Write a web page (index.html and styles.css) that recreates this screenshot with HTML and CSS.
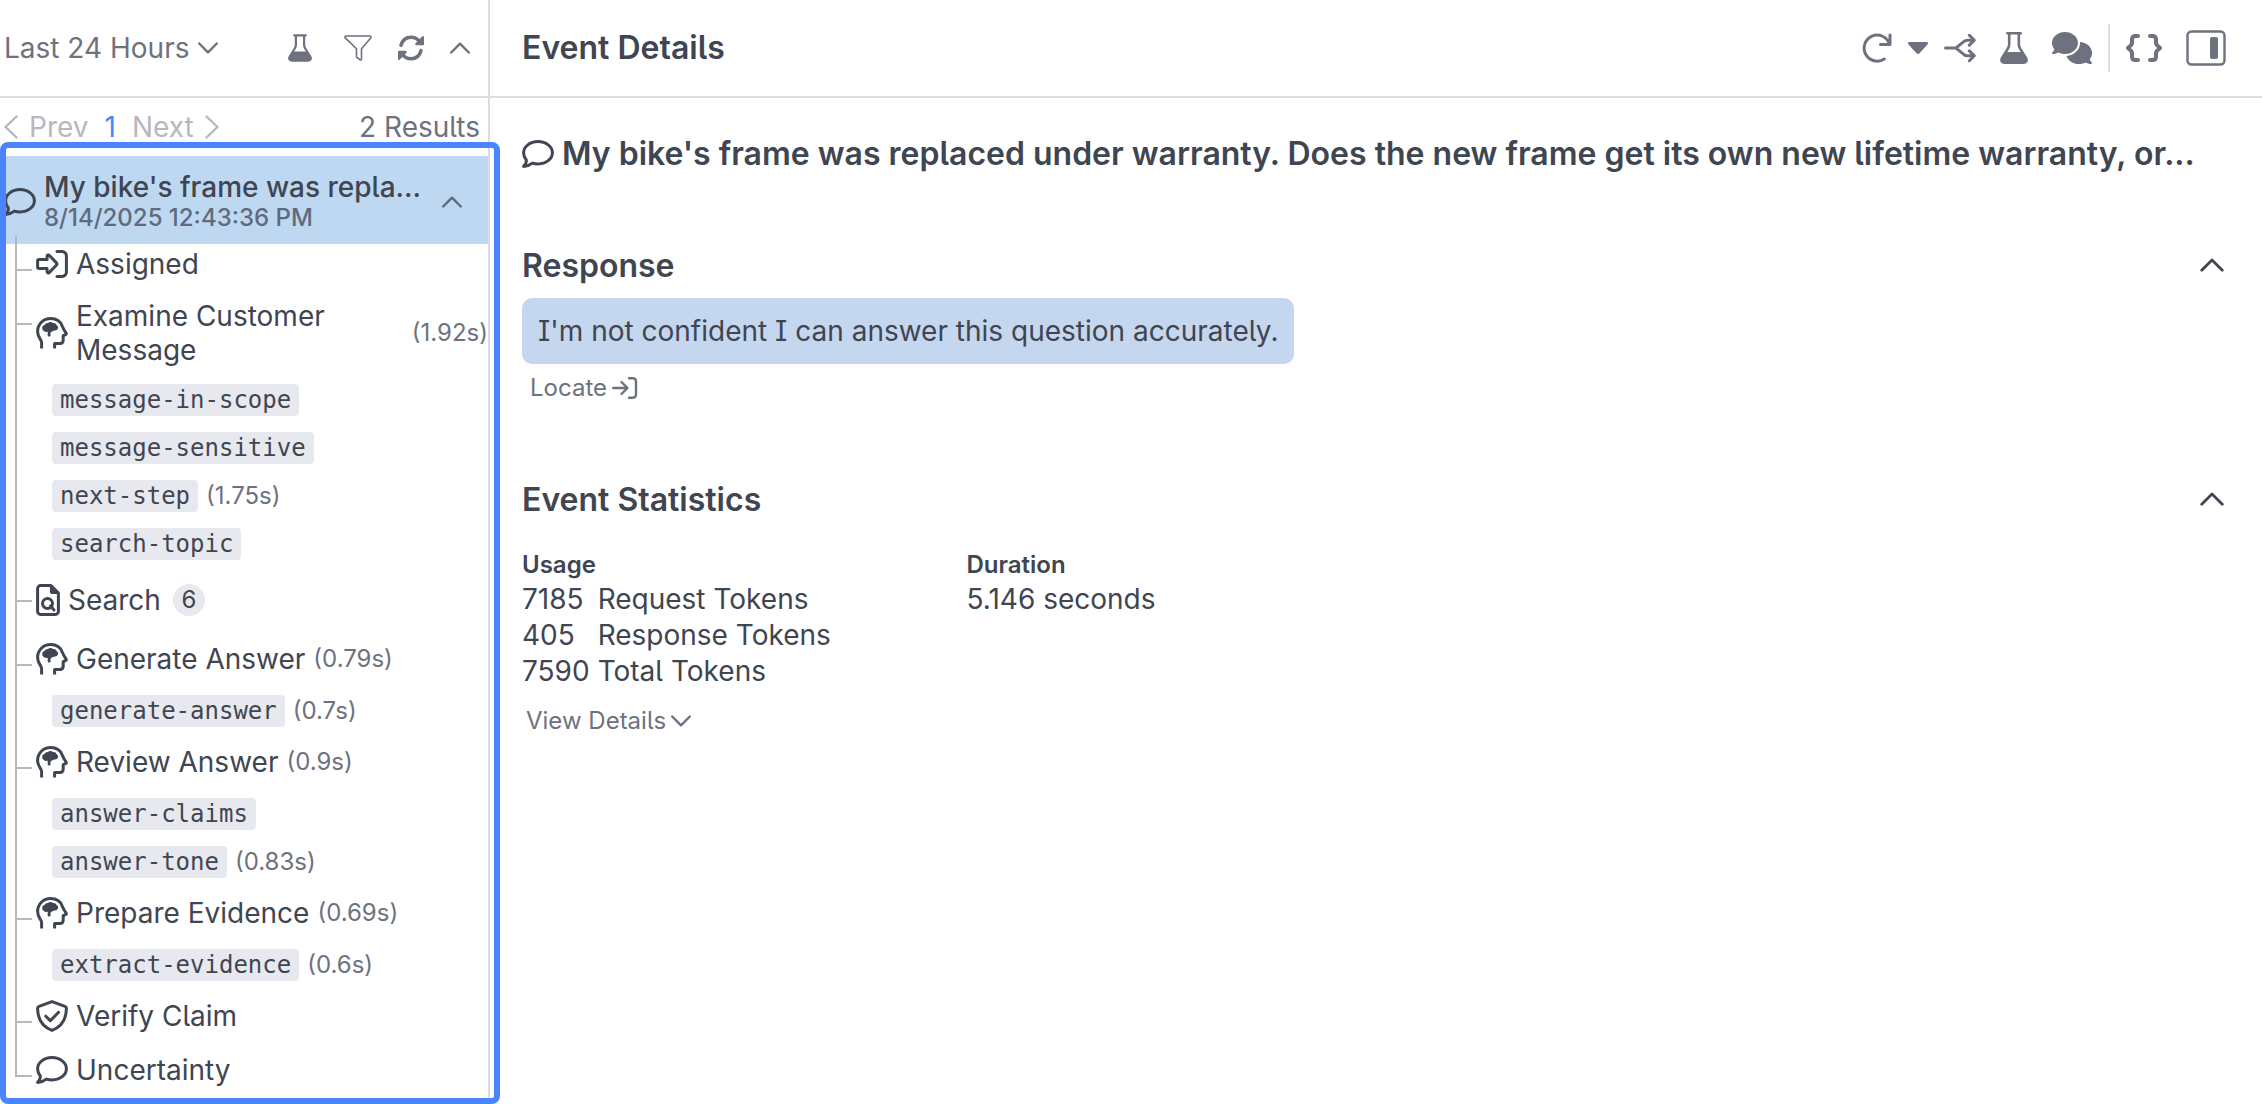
FILE: index.html
```html
<!DOCTYPE html>
<html lang="en">
<head>
    <meta charset="UTF-8">
    <meta name="viewport" content="width=device-width, initial-scale=1.0">
    <title>Event Details</title>
    <link rel="stylesheet" href="styles.css">
</head>
<body>

<!-- Shared icons -->
<svg class="sprite" aria-hidden="true">
    <symbol id="chevron-down" viewBox="0 0 20 12"><path class="line" d="M1.2 1.5 10 10.3l8.8-8.8"/></symbol>
    <symbol id="chevron-up" viewBox="0 0 20 12"><path class="line" d="M1.2 10.5 10 1.7l8.8 8.8"/></symbol>
    <symbol id="flask" viewBox="0 0 28 32">
        <path class="line flask-line" d="M7.300 1.300h13.400M9.200 1.500v10.800c0 1.500-.5 3-1.300 4.300L1.900 26.300c-1.200 2.100.2 4.400 2.600 4.400h19c2.400 0 3.800-2.300 2.600-4.400l-6-9.700c-.8-1.300-1.300-2.800-1.300-4.300V1.500"/>
        <path d="M5.500 20h17l4 7.500L24 31H4l-2.500-3.500z"/>
    </symbol>
    <symbol id="message" viewBox="0 0 32 28"><path class="line thick" d="M1.6 26.4c1.9-2 3-4.4 2.7-6.4-1.7-2-2.7-4.4-2.7-7.2C1.6 6.5 8 1.6 16 1.6s14.4 4.9 14.4 11.1S24 23.9 16 23.9c-2 0-3.900-.3-5.600-.8-2.400 1.900-5.400 3.100-8.800 3.300z"/></symbol>
    <symbol id="head" viewBox="0 0 32 32">
        <path class="line head-line" d="M5.600 31.400v-6.200C5.600 22.600 1.600 20.500 1.600 14.400 1.600 7 7.300 1.600 14.800 1.600c5.700 0 9.700 2.900 11.500 7.600.9 2.300 2.200 4.600 3.700 6.600.6.8.4 1.600-.4 1.900l-2.400 1v4.600c0 2.300-1 3.300-3.300 3.300h-5.300v4.800"/>
        <path d="M6.200 11c0-1.500 1-2.600 2.400-2.900.6-1.500 1.900-2.300 3.300-2.200 1.500-1.300 4-1.200 5.100.2 1.700-.3 3.100.6 3.600 2.100 1.200.5 1.700 1.500 1.500 2.600-.3 1.700-1.500 2.500-3 2.600-1.200 0-2.200.6-3.300 1.200-.7.500-1.300 1-1.300 2v2.200c0 1-2.800 1-2.800 0v-4c-2.800.5-5.500-1-5.500-3.800z"/>
    </symbol>
    <symbol id="locate" viewBox="0 0 26 22"><path class="line" d="M1.200 11h14M9.500 5l6 6-6 6M17 1.200h4a3 3 0 0 1 3 3v13.600a3 3 0 0 1-3 3h-4"/></symbol>
</svg>

<div class="app">
    <!-- Event list -->
    <aside class="sidebar">
        <div class="bar sidebar-bar">
            <label class="range">
                <select aria-label="Time range"><option>Last 24 Hours</option></select>
                <svg class="chevron"><use href="#chevron-down"/></svg>
            </label>
            <div class="sidebar-tools">
                <button aria-label="Tests"><svg width="24" height="28"><use href="#flask"/></svg></button>
                <button class="filter" aria-label="Filter">
                    <svg width="28" height="26" viewBox="0 0 28 26"><path class="line thin" d="M2.200 1h23.600c1 0 1.500 1.200.9 1.900L17.500 13.800v10.400c0 .7-.8 1-1.400.6l-3.600-2.800V13.800L1.300 2.900C.6 2.200 1.200 1 2.200 1z"/></svg>
                </button>
                <button aria-label="Refresh">
                    <svg width="26" height="26" viewBox="0 0 26 26">
                        <path class="line refresh-line" d="M3 10.300C4.500 5 8.500 2.200 13 2.200c3.800 0 7 1.900 9 5M23 15.700C21.500 21 17.500 23.800 13 23.800c-3.800 0-7-1.900-9-5"/>
                        <path d="M24.600 1c.8 0 1.400.5 1.400 1.300v7c0 .7-.4 1-1 1h-6.600c-1.200 0-1.600-1.200-.8-2zM1.400 25C.6 25 0 24.500 0 23.700v-7c0-.7.4-1 1-1h6.600c1.200 0 1.600 1.200.8 2z"/>
                    </svg>
                </button>
                <button aria-label="Collapse"><svg class="chevron"><use href="#chevron-up"/></svg></button>
            </div>
        </div>

        <div class="pager">
            <button class="pager-step" disabled>
                <svg width="14" height="24" viewBox="0 0 14 24"><path class="line" d="M12.500 1.500 1.500 12l11 10.500"/></svg>Prev
            </button>
            <button class="pager-page">1</button>
            <button class="pager-step" disabled>
                Next<svg width="14" height="24" viewBox="0 0 14 24"><path class="line" d="m1.500 1.500 11 10.500-11 10.500"/></svg>
            </button>
            <span class="results">2 Results</span>
        </div>

        <div class="event">
            <div class="event-head">
                <svg class="icon-message"><use href="#message"/></svg>
                <div class="event-text">
                    <div class="event-title">My bike's frame was repla...</div>
                    <div class="event-date">8/14/2025 12:43:36 PM</div>
                </div>
                <button aria-label="Collapse event"><svg class="chevron"><use href="#chevron-up"/></svg></button>
            </div>

            <ul class="tree">
                <li class="step">
                    <div class="step-label leaf">
                        <svg width="32" height="28" viewBox="0 0 32 28"><path class="line thick" d="M1.600 11c0-.9.600-1.500 1.500-1.500h8V6.200c0-1.200 1.300-1.700 2.100-.9l7.300 7.600c.6.600.6 1.500 0 2.100l-7.300 7.600c-.8.8-2.100.3-2.100-.9v-3.200h-8c-.9 0-1.500-.6-1.500-1.500zM21 1.600h5.200a4.200 4.200 0 0 1 4.200 4.200v16.400a4.200 4.200 0 0 1-4.200 4.200H21"/></svg>
                        <span>Assigned</span>
                    </div>
                </li>
                <li class="step">
                    <div class="step-label">
                        <svg class="icon-head"><use href="#head"/></svg>
                        <span>Examine Customer Message</span><span class="time">(1.92s)</span>
                    </div>
                    <ul class="prompts">
                        <li><code>message-in-scope</code></li>
                        <li><code>message-sensitive</code></li>
                        <li><code>next-step</code><span class="time">(1.75s)</span></li>
                        <li><code>search-topic</code></li>
                    </ul>
                </li>
                <li class="step">
                    <div class="step-label counted">
                        <svg width="24" height="32" viewBox="0 0 24 32">
                            <path class="line thick" d="M4.500 1.600H15l7.400 7.400v18.500a2.900 2.900 0 0 1-2.900 2.900h-15a2.900 2.900 0 0 1-2.900-2.900v-23a2.900 2.900 0 0 1 2.900-2.900z"/>
                            <path d="M14 1.500 22.500 10H16a2 2 0 0 1-2-2z"/>
                            <path class="line thick" d="M16.500 19.500a5 5 0 1 1-10 0 5 5 0 0 1 10 0zM14.500 22l3.500 4"/>
                        </svg>
                        <span>Search</span><span class="count">6</span>
                    </div>
                </li>
                <li class="step">
                    <div class="step-label">
                        <svg class="icon-head"><use href="#head"/></svg>
                        <span>Generate Answer</span><span class="time">(0.79s)</span>
                    </div>
                    <ul class="prompts">
                        <li><code>generate-answer</code><span class="time">(0.7s)</span></li>
                    </ul>
                </li>
                <li class="step">
                    <div class="step-label">
                        <svg class="icon-head"><use href="#head"/></svg>
                        <span>Review Answer</span><span class="time">(0.9s)</span>
                    </div>
                    <ul class="prompts">
                        <li><code>answer-claims</code></li>
                        <li><code>answer-tone</code><span class="time">(0.83s)</span></li>
                    </ul>
                </li>
                <li class="step">
                    <div class="step-label">
                        <svg class="icon-head"><use href="#head"/></svg>
                        <span>Prepare Evidence</span><span class="time">(0.69s)</span>
                    </div>
                    <ul class="prompts">
                        <li><code>extract-evidence</code><span class="time">(0.6s)</span></li>
                    </ul>
                </li>
                <li class="step">
                    <div class="step-label leaf">
                        <svg width="32" height="32" viewBox="0 0 32 32"><path class="line thick" d="M16 1.600 29 6.300c.9.300 1.400 1 1.400 2C30.400 18 26 26.500 16 30.400 6 26.500 1.600 18 1.600 8.300c0-1 .5-1.700 1.400-2zM9.800 16.200l4.500 4.500 8.300-8.400"/></svg>
                        <span>Verify Claim</span>
                    </div>
                </li>
                <li class="step">
                    <div class="step-label leaf">
                        <svg class="icon-message"><use href="#message"/></svg>
                        <span>Uncertainty</span>
                    </div>
                </li>
            </ul>
        </div>
    </aside>

    <!-- Event details -->
    <main class="details">
        <header class="bar details-bar">
            <h1>Event Details</h1>
            <div class="tools">
                <div class="retry">
                    <button aria-label="Retry">
                        <svg width="30" height="30" viewBox="0 0 30 30"><path class="line thick" d="M28 2v9.500h-9.500M27.500 11A13 13 0 1 0 22.300 26"/></svg>
                    </button>
                    <button aria-label="Retry options">
                        <svg width="20" height="12" viewBox="0 0 20 12"><path d="M1.500 0h17c1.400 0 2 1.500 1 2.500l-8 8.700c-.9.900-2.100.9-3 0l-8-8.700C-.5 1.500.1 0 1.500 0z"/></svg>
                    </button>
                </div>
                <button aria-label="Branch">
                    <svg width="32" height="30" viewBox="0 0 32 30"><path class="line thick" d="M1.500 15H12M30 7.200h-6.500c-2.300 0-3.500.8-5 2.400L12 15l6.500 5.400c1.500 1.600 2.700 2.400 5 2.400H30M25.300 2.300l5 4.900-5 4.900M25.300 17.900l5 4.900-5 4.900"/></svg>
                </button>
                <button aria-label="Tests"><svg width="28" height="32"><use href="#flask"/></svg></button>
                <button aria-label="Conversation">
                    <svg width="40" height="32" viewBox="0 0 640 512"><path d="M208 352c115 0 208-79 208-176S323 0 208 0 0 79 0 176c0 39 15 74 40 103-4 10-9 18-14 25-8 10-14 15-18 19-14 9-6 29 8 29 32 0 64-11 87-24 31 15 67 24 105 24zM448 176c0 112-99 197-216 207 24 74 104 129 200 129 38 0 74-9 105-24 23 13 55 24 87 24 15 0 22-20 10-29-5-4-11-9-18-19-6-7-11-15-14-25 24-29 39-64 39-103 0-92-85-168-193-175v15z"/></svg>
                </button>
                <div class="view-tools">
                    <button aria-label="Show JSON">
                        <svg width="36" height="28" viewBox="0 0 36 28"><path class="line heavy" d="M12 2H9.500C7.300 2 6 3.400 6 5.500v3.300c0 1.100-.4 1.900-1.200 2.600L2 14l2.800 2.600c.8.7 1.200 1.500 1.200 2.600v3.300C6 24.600 7.300 26 9.500 26H12M24 2h2.500C28.700 2 30 3.400 30 5.500v3.300c0 1.100.4 1.900 1.200 2.600L34 14l-2.800 2.600c-.8.7-1.200 1.500-1.200 2.600v3.300c0 2.100-1.300 3.500-3.500 3.500H24"/></svg>
                    </button>
                    <button aria-label="Toggle panel">
                        <svg width="40" height="36" viewBox="0 0 40 36"><rect class="line" x="1.500" y="1.500" width="37" height="33" rx="4"/><rect x="24" y="7" width="8" height="22" rx="2"/></svg>
                    </button>
                </div>
            </div>
        </header>

        <div class="content">
            <h2 class="question">
                <svg class="icon-message"><use href="#message"/></svg>
                <span>My bike's frame was replaced under warranty. Does the new frame get its own new lifetime warranty, or...</span>
            </h2>

            <section class="response">
                <div class="section-head">
                    <h2>Response</h2>
                    <button aria-label="Collapse response"><svg class="chevron"><use href="#chevron-up"/></svg></button>
                </div>
                <p class="bubble">I'm not confident I can answer this question accurately.</p>
                <button class="text-button locate">Locate <svg width="26" height="22"><use href="#locate"/></svg></button>
            </section>

            <section class="stats">
                <div class="section-head">
                    <h2>Event Statistics</h2>
                    <button aria-label="Collapse statistics"><svg class="chevron"><use href="#chevron-up"/></svg></button>
                </div>
                <div class="stats-grid">
                    <div>
                        <h3>Usage</h3>
                        <table>
                            <tr><td>7185</td><td>Request Tokens</td></tr>
                            <tr><td>405</td><td>Response Tokens</td></tr>
                            <tr><td>7590</td><td>Total Tokens</td></tr>
                        </table>
                    </div>
                    <div>
                        <h3>Duration</h3>
                        <p>5.146 seconds</p>
                    </div>
                </div>
                <button class="text-button view">View Details <svg class="chevron"><use href="#chevron-down"/></svg></button>
            </section>
        </div>
    </main>
</div>

</body>
</html>
```

FILE: styles.css
```css
* {
    box-sizing: border-box;
}
body {
    margin: 0;
    font-family: Inter, "Liberation Sans", sans-serif;
    font-feature-settings: "cv05", "cv08";
    font-size: 28px;
    line-height: 36px;
    color: #404552;
    background-color: #fff;
}
h1, h2, h3, p, ul {
    margin: 0;
    padding: 0;
}
ul {
    list-style: none;
}
h1, h2 {
    font-size: 32px;
    line-height: 40px;
    font-weight: 600;
}
button, select {
    font: inherit;
    font-feature-settings: inherit;
    color: inherit;
    background: none;
    border: none;
    padding: 0;
    margin: 0;
    cursor: pointer;
}
button {
    display: flex;
    align-items: center;
}
select {
    appearance: none;
}

/* icons */
svg {
    display: block;
    flex: none;
    fill: currentColor;
}
.sprite {
    position: absolute;
    width: 0;
    height: 0;
}
.line {
    fill: none;
    stroke: currentColor;
    stroke-width: 2.4;
    stroke-linecap: round;
    stroke-linejoin: round;
}
.thin {
    stroke-width: 1.6;
}
.thick {
    stroke-width: 3;
}
.flask-line {
    stroke-width: 2.6;
}
.refresh-line {
    stroke-width: 3.6;
}
.head-line {
    stroke-width: 3;
    stroke-linecap: butt;
}
.heavy {
    stroke-width: 4;
}
.chevron {
    width: 20px;
    height: 12px;
}
.icon-message {
    width: 32px;
    height: 28px;
}
.icon-head {
    width: 32px;
    height: 32px;
}

.app {
    display: flex;
    min-height: 100vh;
}
.bar {
    display: flex;
    align-items: center;
    justify-content: space-between;
    height: 98px;
    border-bottom: 2px solid #dcdde4;
    color: #6d727e;
}

/* sidebar */
.sidebar {
    display: flex;
    flex-direction: column;
    flex: none;
    width: 490px;
    border-right: 2px solid #dcdde4;
}
.sidebar-bar {
    padding: 0 18px 0 4px;
}
.range {
    display: flex;
    align-items: center;
    gap: 8px;
}
.sidebar-tools {
    display: flex;
    align-items: center;
    gap: 26px;
}
.filter {
    margin-left: 6px;
}
.pager {
    display: flex;
    align-items: center;
    height: 58px;
    padding: 0 8px 0 4px;
    gap: 16px;
    color: #6d727e;
}
.pager-step {
    gap: 11px;
    color: #b7b8bf;
}
.pager-page {
    color: #4a85ff;
}
.results {
    margin-left: auto;
}

.event {
    position: relative;
    flex: 1;
}
/* focus frame around the open event */
.event::after {
    content: "";
    position: absolute;
    inset: -14px -12px 0 0;
    border: 6px solid #4a85ff;
    border-radius: 8px;
    pointer-events: none;
}
.event-head {
    display: flex;
    align-items: center;
    height: 88px;
    padding: 4px 26px 0 4px;
    gap: 8px;
    background-color: #bed8f1;
}
.event-head button {
    color: #5f6b7d;
}
.event-text {
    flex: 1;
    min-width: 0;
}
.event-title {
    line-height: 32px;
    font-weight: 500;
    overflow: hidden;
    text-overflow: ellipsis;
    white-space: nowrap;
}
.event-date {
    font-size: 24px;
    line-height: 30px;
    font-weight: 500;
    color: #5f6b7d;
}

.tree {
    position: relative;
    margin-top: -8px;
    padding-left: 15px;
}
.step {
    position: relative;
    padding-left: 21px;
}
.step::before {
    content: "";
    position: absolute;
    top: 0;
    left: 0;
    height: 100%;
    border-left: 2px solid #b5b6be;
}
.step:last-child::before {
    height: 35px;
}
.step::after {
    content: "";
    position: absolute;
    top: 33px;
    left: 2px;
    width: 15px;
    border-top: 2px solid #b5b6be;
}
.step-label {
    display: flex;
    align-items: center;
    gap: 8px;
    min-height: 56px;
    padding: 9px 0;
    line-height: 34px;
}
.leaf {
    min-height: 54px;
    padding: 10px 0 8px;
}
.counted {
    min-height: 64px;
    padding: 10px 0 8px;
}
.time {
    font-size: 24px;
    line-height: 32px;
    color: #6d727e;
}
.count {
    min-width: 32px;
    margin-left: 4px;
    border-radius: 16px;
    background-color: #e8e9ef;
    font-size: 24px;
    line-height: 32px;
    text-align: center;
}
.prompts {
    display: grid;
    gap: 16px;
    padding: 8px 0 7px 16px;
}
.prompts li {
    display: flex;
    gap: 8px;
}
code {
    padding: 0 8px;
    border-radius: 4px;
    background-color: #e8e9ef;
    font-family: "DejaVu Sans Mono", monospace;
    font-size: 24px;
    line-height: 32px;
}

/* details */
.details {
    flex: 1;
    min-width: 0;
}
.details-bar {
    padding: 0 36px 0 32px;
}
.details-bar h1 {
    color: #404552;
}
.tools {
    display: flex;
    align-items: center;
    gap: 24px;
}
.retry {
    display: flex;
    gap: 16px;
    margin-right: -8px;
}
.view-tools {
    display: flex;
    align-items: center;
    gap: 24px;
    height: 48px;
    margin-left: -8px;
    padding-left: 16px;
    border-left: 2px solid #dcdde4;
}
.content {
    padding: 36px 38px 0 32px;
}
.question {
    display: flex;
    align-items: center;
    gap: 8px;
}
.question span {
    overflow: hidden;
    text-overflow: ellipsis;
    white-space: nowrap;
}
.section-head {
    display: flex;
    align-items: center;
    justify-content: space-between;
}
.section-head button {
    padding-bottom: 3px;
}
.section-head .chevron {
    width: 24px;
    height: 14px;
}
.response {
    margin-top: 72px;
}
.bubble {
    width: fit-content;
    margin-top: 12px;
    padding: 15px 16px;
    border-radius: 10px;
    background-color: #c5d7ef;
}
.text-button {
    gap: 5px;
    font-size: 24px;
    line-height: 32px;
    color: #6d727e;
}
.locate {
    margin: 8px 0 0 8px;
}
.stats {
    margin-top: 76px;
}
.stats-grid {
    display: grid;
    grid-template-columns: repeat(4, 1fr);
    column-gap: 76px;
    margin-top: 28px;
}
h3 {
    font-size: 24px;
    line-height: 33px;
    font-weight: 600;
}
table {
    border-spacing: 0;
}
td {
    padding: 0 8px 0 0;
}
.view {
    margin: 16px 0 0 4px;
}
```
